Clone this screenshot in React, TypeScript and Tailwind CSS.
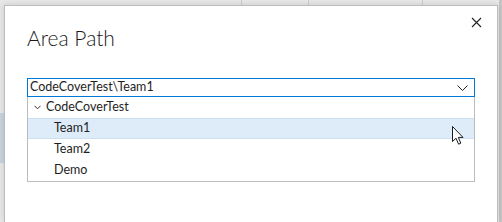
const rows = [
  { label: 'Team1', active: true },
  { label: 'Team2', active: false },
  { label: 'Demo', active: false },
];

function Cursor() {
  return (
    <svg width="13" height="20" viewBox="0 0 13 20" className="absolute right-[9px] top-[7px]">
      <path
        d="M0.5 0.5 L0.5 15.5 L4 12.2 L6.6 18.2 L8.8 17.2 L6.3 11.4 L11 11.4 Z"
        fill="#ffffff"
        stroke="#1a1a1a"
        strokeWidth="1"
        strokeLinejoin="round"
      />
    </svg>
  );
}

export default function App() {
  return (
    <div className="relative h-[222px] w-[502px] overflow-hidden bg-[#e8e8e8] pl-[4px] pr-[4px] pt-[5px] font-['Lato',sans-serif]">
      {/* page behind the dialog */}
      <div className="absolute left-[241px] top-0 h-[5px] w-px bg-[#cdcdcd]" />
      <div className="absolute left-[308px] top-0 h-[5px] w-px bg-[#cdcdcd]" />
      <div className="absolute left-[422px] top-0 h-[5px] w-px bg-[#cdcdcd]" />
      <div className="absolute left-0 top-[113px] h-[50px] w-[4px] bg-[#c9d4de]" />
      <div className="absolute right-0 top-0 h-full w-[3px] bg-[#c6c6c6]" />

      <div className="relative flex h-[217px] flex-col border border-b-0 border-[#bdbdbd] bg-white shadow-[0_0_6px_rgba(0,0,0,0.15)]">
        <div className="flex items-start justify-between pl-[22px] pr-[15px]">
          <h1 className="pt-[18px] text-[21px] font-light leading-[28px] text-[#1a1a1a]">Area Path</h1>
          <svg width="11" height="11" viewBox="0 0 11 11" className="mt-[11px]">
            <path d="M1 1 L10 10 M10 1 L1 10" stroke="#222" strokeWidth="1.1" />
          </svg>
        </div>

        <div className="ml-[22px] mr-[22px] mt-[26px]">
          <div className="flex h-[19px] items-center justify-between border border-[#0078d7] pl-[2px] pr-[6px] text-[12.5px] leading-none text-[#1e1e1e]">
            <span>CodeCoverTest\Team1</span>
            <svg width="11" height="6" viewBox="0 0 11 6">
              <path d="M0.5 0.5 L5.5 5.5 L10.5 0.5" fill="none" stroke="#222" strokeWidth="1" />
            </svg>
          </div>
          <div className="border border-t-0 border-[#bcbcbc] text-[12.5px] text-[#1e1e1e]">
            <div className="flex h-[21px] items-center pl-[6px]">
              <svg width="7" height="5" viewBox="0 0 7 5" className="mr-[5px]">
                <path d="M0.5 0.8 L3.5 3.8 L6.5 0.8" fill="none" stroke="#333" strokeWidth="1" />
              </svg>
              <span>CodeCoverTest</span>
            </div>
            {rows.map((r) => (
              <div
                key={r.label}
                className={
                  r.active
                    ? 'relative flex h-[21px] items-center border-y border-[#cbe0f3] bg-[#deebf8] pl-[26px]'
                    : 'flex h-[21px] items-center pl-[26px]'
                }
              >
                <span>{r.label}</span>
                {r.active && <Cursor />}
              </div>
            ))}
          </div>
        </div>
      </div>
    </div>
  );
}
